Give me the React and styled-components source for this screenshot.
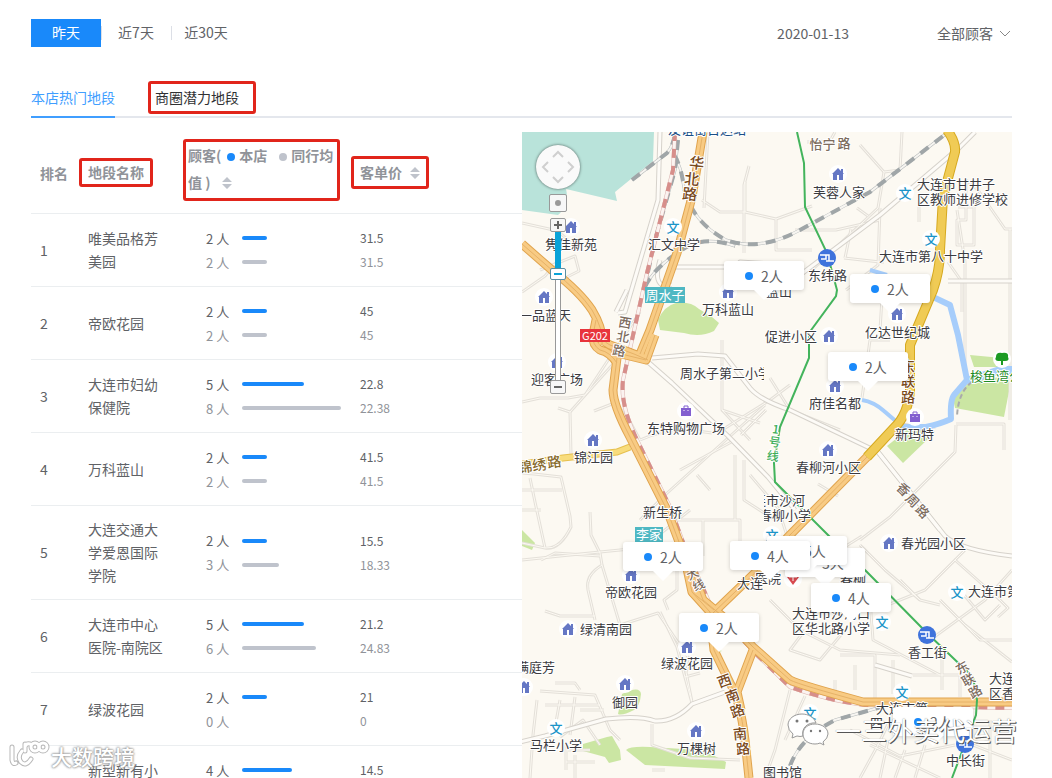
import React, { useState } from "react";
import styled, { createGlobalStyle } from "styled-components";

const COLORS = {
  blue: "#1989fa",
  tabBlue: "#409eff",
  text: "#606266",
  dark: "#303133",
  grey: "#909399",
  bar: "#bfc3cc",
  line: "#ebeef0",
  red: "#e1251b",
};

const MAX_PEOPLE = 8;

const rows = [
  { name: "唯美品格芳美园", people: [2, 2], price: ["31.5", "31.5"] },
  { name: "帝欧花园", people: [2, 2], price: ["45", "45"] },
  { name: "大连市妇幼保健院", people: [5, 8], price: ["22.8", "22.38"] },
  { name: "万科蓝山", people: [2, 2], price: ["41.5", "41.5"] },
  { name: "大连交通大学爱恩国际学院", people: [2, 3], price: ["15.5", "18.33"] },
  { name: "大连市中心医院-南院区", people: [5, 6], price: ["21.2", "24.83"] },
  { name: "绿波花园", people: [2, 0], price: ["21", "0"] },
  { name: "新型新有小区", people: [4, 4], price: ["14.5", "15.2"] },
];

// map coordinates all share the viewBox below
const MAP = { x: 522, y: 132, width: 490, height: 646 };

const markers = [
  { x: 785, y: 548, count: 3 },
  { x: 767, y: 536, count: 5 },
  { x: 724, y: 261, count: 2 },
  { x: 850, y: 274, count: 2 },
  { x: 828, y: 352, count: 2 },
  { x: 623, y: 542, count: 2 },
  { x: 730, y: 541, count: 4 },
  { x: 811, y: 583, count: 4 },
  { x: 679, y: 613, count: 2 },
  { x: 893, y: 707, count: 2 },
];

const water = ["M522 132H654L653 161L615 192L617 201L566 189A26 26 0 0 1 558 215L522 210Z"];

const parks = [
  "M658 320Q664 306 676 303Q690 301 699 309L712 317L719 323L714 331Q700 338 684 333L660 330Z",
  "M970 355L1002 358L1000 367L974 367Z",
  "M953 398L972 380L1012 376L1004 417L955 408Z",
  "M887 446L907 430L930 430L928 439L903 463Z",
  "M622 694Q640 685 641 694Q640 706 634 710Q622 716 618 714Z",
  "M583 744L607 737L612 736L620 750L621 760L609 763L605 757L583 751Z",
  "M626 750Q630 746 650 747L700 750Q716 756 726 762L725 769L645 765Z",
  "M522 530L535 543L532 550L522 546Z",
  "M714 648L722 651L716 653Z",
];

const river = [
  "M870 270L887 275",
  "M933 297L950 305L958 335L967 380L954 395Q950 400 951 419Q940 424 926 427H900",
  "M898 423L884 411Q874 402 862 400",
];

const minorRoads = [
  "M522 223L558 231L572 244",
  "M522 292L545 276L560 258",
  "M540 270L575 256L579 271L563 279",
  "M522 402L540 398H568L585 395L640 312",
  "M558 408L570 412L571 455",
  "M570 412L614 363",
  "M594 411L612 404",
  "M522 473L534 474L561 477L570 516L571 527Q560 550 545 548L522 543",
  "M530 478L535 502L545 548",
  "M522 490H562",
  "M522 510H541",
  "M590 512L591 535L600 553L602 565Q585 575 588 590L595 620",
  "M522 560L560 556L640 548",
  "M602 565L620 625L658 613L690 660L686 672L692 702",
  "M545 611L560 616H595",
  "M660 612L677 647L683 670L692 703",
  "M685 677L700 673",
  "M677 520H740V560",
  "M703 520V556",
  "M677 560L677 590L664 600L668 610",
  "M640 520L665 495L728 438L765 405",
  "M697 475L710 490",
  "M640 440Q670 425 712 433",
  "M622 407L640 440",
  "M749 166L744 185V253",
  "M745 182V212",
  "M702 200L720 212H745L776 219L812 206",
  "M704 208L708 132",
  "M776 219V250H812",
  "M795 230H836L880 220",
  "M860 145L884 172L900 170",
  "M902 132L900 170",
  "M880 208L878 265L846 290",
  "M851 229L845 258",
  "M857 208L868 216",
  "M884 172L878 208L812 270",
  "M807 142L830 141L835 132",
  "M844 258L880 262L884 262",
  "M919 200V222",
  "M966 180L978 190L1005 229H1012",
  "M958 207H974V245H957V220H966V182",
  "M1010 229V420",
  "M948 262L962 282V312",
  "M957 210L965 262V370",
  "M880 330L882 298",
  "M862 398L870 340H890",
  "M770 378L790 410L840 430",
  "M722 340V410L750 440",
  "M722 430L770 400",
  "M770 400L790 385",
  "M735 455V520",
  "M744 460V500L775 520",
  "M722 410L760 423",
  "M741 435L766 410",
  "M750 475L778 508L790 545",
  "M860 540L890 517L955 452L956 425",
  "M956 424H1004V450",
  "M818 484L838 496",
  "M830 556L862 536",
  "M860 545L885 570L920 600",
  "M880 608L925 590L955 560L1000 600",
  "M900 580L920 600L940 605",
  "M955 560L965 550",
  "M930 640L985 600L1012 570",
  "M940 600L980 640H1012",
  "M965 625L1012 662",
  "M960 590L985 620L1000 605",
  "M990 590L1008 608L998 617",
  "M900 655L840 650L800 630L770 600",
  "M845 630L820 660L790 650L805 630",
  "M840 655H875V700",
  "M835 680V700",
  "M855 665V690",
  "M893 660V694",
  "M913 675H960V697",
  "M942 650V690",
  "M870 600L873 640L940 675",
  "M790 690L775 750L765 778",
  "M805 696L785 740",
  "M890 720L878 745L860 778",
  "M850 730L900 756L955 745",
  "M870 745L940 778",
  "M888 740L880 778",
  "M905 750L895 778",
  "M925 745L915 778",
  "M990 720V778",
  "M960 740L1012 760",
  "M540 691L595 695L610 730L620 740",
  "M537 700L533 735L530 778",
  "M555 683H575L580 690",
  "M545 705H600",
  "M560 700L556 722",
  "M575 697L570 735",
  "M560 737L583 720L600 745",
  "M580 710H604",
  "M566 745V770",
  "M568 750H590",
  "M566 762H595",
  "M575 755V778",
  "M652 724V745L690 758L740 760",
  "M652 770H665",
  "M541 560L555 553L600 556",
  "M680 470L735 440",
  "M690 510L640 550",
];

const mediumRoads = [
  "M660 132L658 200L625 312L618 313",
  "M616 312L627 290",
  "M676 267H740V262L800 266",
  "M660 260Q654 280 662 285H672",
  "M520 742L545 736L606 719Q640 715 655 721Q675 722 692 704L725 692",
  "M648 362L672 383L728 436L768 477L795 510",
  "M652 358L698 354L725 356L750 388Q760 400 790 410L878 452L940 530",
  "M878 452L945 536Q960 550 1012 556",
  "M975 132L960 147L880 215L800 275",
  "M906 405L900 425L935 430",
  "M948 281H1012",
  "M875 665L912 676",
];

const trunks = [
  "M522 244L553 271Q580 292 592 310Q604 330 602 345",
  "M596 320L593 335Q592 345 600 350Q610 352 617 363",
  "M605 335Q600 340 610 345L634 354L648 360",
  "M703 132L692 197L677 253L650 330L640 354",
  "M655 335L646 360L617 353",
  "M617 358L613 390Q613 405 630 437L667 510L682 550",
  "M682 545L692 592L710 612L714 650L730 683Q740 700 745 740L749 778",
  "M688 560L703 600L727 620L753 647L790 680Q800 685 863 702H1012",
  "M712 614L760 568L787 538L867 457",
  "M692 592L714 610",
  "M753 650L737 692L741 710",
];

const yellowRoads = [
  "M867 457L894 428Q908 415 910 390V345L933 290Q940 270 940 250L943 197L955 152Q956 142 947 130",
];

const railways = [
  "M632 180L667 153Q674 145 675 132",
  "M678 140L675 170L655 240L644 290",
  "M674 155Q681 165 684 188Q692 222 726 240Q760 252 800 230L870 192L947 133",
  "M645 287Q655 265 690 245Q710 237 735 246",
  "M790 766Q800 738 835 720L885 706",
];

const redRailways = [
  "M675 132L673 170L647 273L623 380Q620 405 637 440L670 507L684 545L710 604",
  "M710 604L755 653L790 687Q830 701 865 705L1012 708",
];

const houses = [
  [571, 227], [838, 174], [728, 292], [829, 336], [897, 314], [835, 386],
  [544, 297], [557, 362], [593, 440], [828, 450], [889, 543], [631, 575],
  [568, 629], [687, 647], [625, 684], [524, 687], [696, 731],
];

const schools = [
  [673, 227], [905, 193], [931, 239], [772, 535], [957, 592], [882, 622],
  [902, 692], [810, 713], [556, 728],
];

const metros = [[827, 258], [927, 635], [965, 744]];

const bags = [[686, 411], [915, 417]];

const places = [
  { x: 545, y: 249, text: "隽佳新苑" },
  { x: 648, y: 249, text: "汇文中学" },
  { x: 813, y: 197, text: "芙蓉人家" },
  { x: 917, y: 189, text: "大连市甘井子" },
  { x: 917, y: 204, text: "区教师进修学校" },
  { x: 879, y: 261, text: "大连市第八十中学" },
  { x: 808, y: 280, text: "东纬路" },
  { x: 766, y: 296, text: "蓝山" },
  { x: 702, y: 314, text: "万科蓝山" },
  { x: 765, y: 341, text: "促进小区" },
  { x: 865, y: 337, text: "亿达世纪城" },
  { x: 519, y: 320, text: "一品蓝天" },
  { x: 531, y: 384, text: "迎客广场" },
  { x: 809, y: 408, text: "府佳名都" },
  { x: 647, y: 433, text: "东特购物广场" },
  { x: 895, y: 439, text: "新玛特" },
  { x: 574, y: 462, text: "锦江园" },
  { x: 796, y: 472, text: "春柳河小区" },
  { x: 643, y: 517, text: "新生桥" },
  { x: 901, y: 548, text: "春光园小区" },
  { x: 755, y: 583, text: "医院" },
  { x: 737, y: 588, text: "大连" },
  { x: 840, y: 584, text: "春柳" },
  { x: 605, y: 597, text: "帝欧花园" },
  { x: 968, y: 596, text: "大连市第" },
  { x: 792, y: 618, text: "大连市沙河口" },
  { x: 792, y: 633, text: "区华北路小学" },
  { x: 580, y: 634, text: "绿清南园" },
  { x: 908, y: 657, text: "香工街" },
  { x: 661, y: 668, text: "绿波花园" },
  { x: 516, y: 672, text: "满庭芳" },
  { x: 989, y: 683, text: "大连市" },
  { x: 989, y: 698, text: "区香工" },
  { x: 612, y: 707, text: "御园" },
  { x: 876, y: 713, text: "大连市第" },
  { x: 870, y: 728, text: "四十" },
  { x: 530, y: 750, text: "马栏小学" },
  { x: 677, y: 753, text: "万棵树" },
  { x: 946, y: 765, text: "中长街" },
  { x: 763, y: 777, text: "图书馆" },
];

// street names are set one glyph at a time along the road
const streets = [
  { color: "#7a4a1c", size: 15, turn: 6, glyphs: [["华", 697, 162], ["北", 692, 178], ["路", 690, 193]] },
  { color: "#7d6c5e", size: 13, turn: 0, glyphs: [["怡", 816, 143], ["宁", 829, 143], ["路", 844, 142]] },
  { color: "#7d6c5e", size: 13, turn: 10, glyphs: [["西", 625, 322], ["北", 623, 336], ["路", 619, 350]] },
  { color: "#7a4a1c", size: 14, turn: 0, glyphs: [["东", 908, 365], ["联", 908, 380], ["路", 908, 396]] },
  { color: "#85682a", size: 14, turn: -8, glyphs: [["锦", 525, 466], ["绣", 539, 464], ["路", 554, 461]] },
  { color: "#3fae5a", size: 12, turn: 8, glyphs: [["1", 776, 428], ["号", 775, 441], ["线", 773, 455]] },
  { color: "#7d6c5e", size: 13, turn: 45, glyphs: [["香", 904, 489], ["周", 913, 500], ["路", 923, 511]] },
  { color: "#7d6c5e", size: 13, turn: -30, glyphs: [["东", 962, 667], ["联", 968, 679], ["路", 975, 691]] },
  { color: "#7d6c5e", size: 12, turn: -25, glyphs: [["大", 692, 573], ["线", 698, 584]] },
  { color: "#7a4a1c", size: 14, turn: -20, glyphs: [["西", 724, 680], ["南", 732, 695], ["路", 737, 710]] },
  { color: "#7a4a1c", size: 14, turn: -5, glyphs: [["南", 740, 733], ["路", 743, 748]] },
];

const paths = (list) => list.map((d) => <path key={d} d={d} />);

const Road = ({ list, edge, fill, width, border = 2 }) => (
  <g fill="none" strokeLinejoin="round">
    <g stroke={edge} strokeWidth={width + border}>{paths(list)}</g>
    <g stroke={fill} strokeWidth={width}>{paths(list)}</g>
  </g>
);

const CityMap = () => (
  <MapSvg
    viewBox={`${MAP.x} ${MAP.y} ${MAP.width} ${MAP.height}`}
    width={MAP.width}
    height={MAP.height}
  >
    <clipPath id="tileRight">
      <rect x="764" y="132" width="248" height="646" />
    </clipPath>
    <clipPath id="tileLeft">
      <rect x="522" y="132" width="242" height="646" />
    </clipPath>
    <g fill="#b9e3da">{paths(water)}</g>
    <g fill="#cbe6a3">{paths(parks)}</g>
    <Road list={minorRoads} edge="#e4e0d9" fill="#fcf9f2" width={1} />
    <Road list={mediumRoads} edge="#d6d2cb" fill="#fdfbf7" width={3} />
    <g fill="none" stroke="#a6cdfb" strokeWidth="6" strokeLinejoin="round">
      <path d={river[1]} />
      <g strokeWidth="4">
        <path d={river[0]} />
        <path d={river[2]} />
      </g>
      <path d="M967 381L1000 370H1012" strokeWidth="8" />
    </g>
    <path d="M972 382Q958 392 957 417" fill="none" stroke="#aaa" strokeWidth="2" strokeDasharray="5 3" />
    <Road list={railways} edge="#b4b9ba" fill="#f7f5f1" width={2} border={1} />
    <g fill="none" stroke="#a0a6a8" strokeWidth="4" strokeDasharray="10 8">{paths(railways)}</g>
    <Road list={redRailways} edge="#dbb3b0" fill="#fbf3f0" width={3} border={1} />
    <g fill="none" stroke="#d78f8b" strokeWidth="4" strokeDasharray="9 8">{paths(redRailways)}</g>
    <Road list={["M522 464L563 458L617 452L630 447"]} edge="#e6c04f" fill="#f8dc7c" width={5} />
    <Road list={trunks} edge="#e0a44e" fill="#f8cb84" width={7} />
    <g fill="none" stroke="#e6b268" strokeWidth="1">{paths(trunks)}</g>
    <Road list={yellowRoads} edge="#d6a91f" fill="#f0cb55" width={8} />
    <path
      d="M797 132L804 163L805 207L827 253L837 290L836 296L809 333V358L780 427L774 463L775 482L830 537L867 572L927 633L973 677L977 700L976 715L952 778"
      fill="none"
      stroke="#43b45c"
      strokeWidth="2"
    />

    <g fill="#fff">
      {[...houses, ...schools, ...bags, [793, 579], [1002, 359]].map(([x, y]) => (
        <circle key={`${x}-${y}`} cx={x} cy={y} r="9" />
      ))}
    </g>
    {houses.map(([x, y]) => (
      <path
        key={`${x}-${y}`}
        transform={`translate(${x} ${y})`}
        d="M-6 0L0-6L3-3V-5H5V-1L6 0H5V6H1V1H-1V6H-5V0Z"
        fill="#6577c4"
      />
    ))}
    {schools.map(([x, y]) => (
      <SchoolGlyph key={`${x}-${y}`} x={x} y={y + 5}>文</SchoolGlyph>
    ))}
    {bags.map(([x, y]) => (
      <g key={x} transform={`translate(${x} ${y})`}>
        <path d="M-5-3H5V5H-5Z" fill="#8360d0" />
        <path d="M-2-2V-5H2V-2" fill="none" stroke="#8360d0" />
        <path d="M-2-1V0M2-1V0" stroke="#fff" />
      </g>
    ))}
    {metros.map(([x, y]) => (
      <g key={x} transform={`translate(${x} ${y})`}>
        <circle r="9" fill="#3f73dc" />
        <path d="M-7-3H2V3H7M-6 1H-1V-3M-1 3H2" fill="none" stroke="#fff" strokeWidth="1.5" />
      </g>
    ))}
    <path d="M787 577L790 573H796L799 577L793 585Z" fill="#d94a50" />
    <path d="M793 574V581M789 577H797" stroke="#fff" />
    <path
      d="M1001 365V361H998Q994 360 996 357Q996 352 1002 353Q1009 352 1008 357Q1010 361 1005 361H1003V365Z"
      fill="#1c9a24"
    />

    {places.map((place) => (
      <Place key={`${place.x}-${place.y}`} x={place.x} y={place.y}>{place.text}</Place>
    ))}
    <g clipPath="url(#tileLeft)">
      <Place x="680" y="378">周水子第二小学</Place>
    </g>
    <g clipPath="url(#tileRight)">
      <Place x="740" y="505">大连市沙河</Place>
      <Place x="746" y="520">区春柳小学</Place>
    </g>
    <Place x="970" y="381" $color="#1c8a24">梭鱼湾公园</Place>
    <Place x="668" y="134" $color="#1a4f86">友谊街百达站</Place>

    {streets.map((street) =>
      street.glyphs.map(([glyph, x, y]) => (
        <Street
          key={`${x}-${y}`}
          $color={street.color}
          $size={street.size}
          transform={`translate(${x} ${y}) rotate(${street.turn})`}
          dominantBaseline="central"
        >
          {glyph}
        </Street>
      ))
    )}

    <rect x="645" y="287" width="40" height="16" fill="#4fb8c3" />
    <Badge x="665" y="300" $size={13}>周水子</Badge>
    <rect x="635" y="527" width="28" height="15" fill="#4fb8c3" />
    <Badge x="649" y="539" $size={13}>李家</Badge>
    <rect x="580" y="329" width="30" height="13" fill="#e8343c" />
    <Badge x="595" y="340" $size={11}>G202</Badge>
  </MapSvg>
);

const Controls = () => {
  const [level, setLevel] = useState(14);
  return (
    <ControlStack>
      <PanButton aria-label="平移地图">
        <svg width="44" height="44" viewBox="0 0 44 44" fill="none" stroke="#cfcfcf" strokeWidth="2">
          <path d="M17 12L22 7L27 12M17 32L22 37L27 32M12 17L7 22L12 27M32 17L37 22L32 27" />
        </svg>
      </PanButton>
      <CenterButton aria-label="回到中心">
        <svg width="8" height="8" viewBox="0 0 8 8">
          <circle cx="4" cy="4" r="3" fill="#999" />
        </svg>
      </CenterButton>
      <ZoomButton aria-label="放大" onClick={() => setLevel(Math.min(18, level + 1))}>
        <svg width="10" height="10" viewBox="0 0 10 10" stroke="#666" strokeWidth="2">
          <path d="M1 5H9M5 1V9" />
        </svg>
      </ZoomButton>
      <ZoomRange
        type="range"
        aria-label="缩放级别"
        min="3"
        max="18"
        value={level}
        onChange={(e) => setLevel(Number(e.target.value))}
      />
      <ZoomButton aria-label="缩小" onClick={() => setLevel(Math.max(3, level - 1))}>
        <svg width="10" height="10" viewBox="0 0 10 10" stroke="#666" strokeWidth="2">
          <path d="M1 5H9" />
        </svg>
      </ZoomButton>
    </ControlStack>
  );
};

const SortIcon = ({ gap }) => (
  <SortSvg $gap={gap} width="10" height="12" viewBox="0 0 10 12" fill="#bfc3cb">
    <path d="M5 0L10 5H0ZM5 12L0 7H10Z" />
  </SortSvg>
);

const App = () => {
  const [range, setRange] = useState("昨天");
  return (
    <>
      <GlobalStyle />
      <Page>
        <Toolbar>
          <RangeGroup>
            {["昨天", "近7天", "近30天"].map((label) => (
              <RangeButton key={label} $active={range === label} onClick={() => setRange(label)}>
                {label}
              </RangeButton>
            ))}
          </RangeGroup>
          <DateText dateTime="2020-01-13">2020-01-13</DateText>
          <SelectWrapper>
            <CustomerSelect aria-label="顾客类型" defaultValue="全部顾客">
              <option>全部顾客</option>
              <option>新顾客</option>
              <option>老顾客</option>
            </CustomerSelect>
            <Chevron width="12" height="8" viewBox="0 0 12 8" fill="none" stroke="#888">
              <path d="M1 1L6 6L11 1" />
            </Chevron>
          </SelectWrapper>
        </Toolbar>

        <Tabs role="tablist">
          <Tab role="tab" aria-selected="true" $active>本店热门地段</Tab>
          <Tab role="tab" aria-selected="false">
            <Highlight $height={33} $pad="0 14px 0 4px">商圈潜力地段</Highlight>
          </Tab>
        </Tabs>

        <Content>
          <Table>
            <colgroup>
              <Col $width={48} />
              <Col $width={104} />
              <Col $width={168} />
              <Col />
            </colgroup>
            <thead>
              <tr>
                <HeadCell $left={9}>排名</HeadCell>
                <HeadCell>
                  <Highlight $height={29} $pad="0 6px">地段名称</Highlight>
                </HeadCell>
                <HeadCell $bottom={6}>
                  <Highlight $height={62} $width={157} $pad="0 2px" $line={27}>
                    顾客(
                    <Dot $color={COLORS.blue} $gap={6} />
                    本店
                    <Dot $color={COLORS.bar} $gap={12} />
                    同行均值 )
                    <SortIcon gap={12} />
                  </Highlight>
                </HeadCell>
                <HeadCell>
                  <Highlight $height={33} $pad="0 6px">
                    客单价
                    <SortIcon gap={8} />
                  </Highlight>
                </HeadCell>
              </tr>
            </thead>
            <tbody>
              {rows.map((row, index) => (
                <tr key={row.name}>
                  <Cell $left={9}>{index + 1}</Cell>
                  <Cell $left={9} $right={18}>{row.name}</Cell>
                  <Cell $left={23} $right={10}>
                    {row.people.map((count, i) => (
                      <People key={i} $peer={i === 1}>
                        <span>{count} 人</span>
                        <Track>
                          <Bar $peer={i === 1} style={{ width: `${(count / MAX_PEOPLE) * 100}%` }} />
                        </Track>
                      </People>
                    ))}
                  </Cell>
                  <Cell $left={9}>
                    {row.price.map((price, i) => (
                      <Price key={i} $peer={i === 1}>{price}</Price>
                    ))}
                  </Cell>
                </tr>
              ))}
            </tbody>
          </Table>

          <MapPanel>
            <CityMap />
            {markers.map((marker) => (
              <Marker
                key={`${marker.x}-${marker.y}`}
                style={{ left: marker.x - MAP.x, top: marker.y - MAP.y }}
              >
                <MarkerDot />
                {marker.count}人
              </Marker>
            ))}
            <Controls />
          </MapPanel>
        </Content>

        <AgencyMark>
          <svg width="42" height="36" viewBox="0 0 42 36" fill="#fff" stroke="#999" strokeWidth="1">
            <path d="M15 2C7 2 1 7 1 13Q1 18 6 22L5 26L10 24Q13 25 16 24C14 16 21 10 29 11C27 5 21 2 15 2Z" />
            <path d="M28 12C21 12 16 16 16 22S21 32 28 32Q31 32 33 31L37 33L36 30Q41 26 41 22C41 16 35 12 28 12Z" />
            <g fill="#777" stroke="none">
              <circle cx="10" cy="9" r="1.5" />
              <circle cx="20" cy="9" r="1.5" />
              <circle cx="24" cy="19" r="1.2" />
              <circle cx="33" cy="19" r="1.2" />
            </g>
          </svg>
          <AgencyName>一三外卖代运营</AgencyName>
        </AgencyMark>
        <SiteMark>
          <svg width="42" height="32" viewBox="0 0 42 32" fill="none" strokeLinecap="round">
            {[["#b8b8b8", 5], ["#fff", 3]].map(([stroke, width]) => (
              <g key={stroke} stroke={stroke} strokeWidth={width}>
                <path d="M4 7V20Q5 25 8 23M14 11Q9 17 13 22Q18 27 23 19" />
                <path d="M17 11V4M17 7Q18 3 22 4" />
                <circle cx="27" cy="7" r="4" />
                <circle cx="35" cy="7" r="4" />
              </g>
            ))}
          </svg>
          <SiteName>大数跨境</SiteName>
        </SiteMark>
      </Page>
    </>
  );
};

const GlobalStyle = createGlobalStyle`
  * {
    box-sizing: border-box;
  }

  body {
    margin: 0;
    background: #fff;
    color: ${COLORS.text};
    font-family: "Noto Sans CJK SC", sans-serif;
    font-size: 14px;
  }

  button, select, input {
    margin: 0;
    padding: 0;
    border: none;
    font: inherit;
    color: inherit;
  }
`;

const Page = styled.div`
  position: relative;
  display: flex;
  flex-direction: column;
  height: 100vh;
  overflow: hidden;
  padding: 19px 40px 0 31px;
`;

const Toolbar = styled.div`
  display: flex;
  align-items: center;
  flex-shrink: 0;
  height: 28px;
`;

const RangeGroup = styled.div`
  display: flex;
  margin-right: auto;
`;

const RangeButton = styled.button`
  width: 70px;
  height: 28px;
  padding-bottom: 2px;
  background: ${(props) =>
    props.$active
      ? COLORS.blue
      : "linear-gradient(#dcdfe6, #dcdfe6) left center / 1px 14px no-repeat"};
  color: ${(props) => (props.$active ? "#fff" : COLORS.text)};
  cursor: pointer;
`;

const DateText = styled.time`
  margin-right: 88px;
`;

const SelectWrapper = styled.div`
  position: relative;
  width: 75px;
`;

const CustomerSelect = styled.select`
  width: 100%;
  appearance: none;
  background: transparent;
`;

const Chevron = styled.svg`
  position: absolute;
  right: 1px;
  top: 7px;
  pointer-events: none;
`;

const Tabs = styled.div`
  display: flex;
  flex-shrink: 0;
  gap: 33px;
  height: 37px;
  margin: 34px 0 14px;
  box-shadow: inset 0 -2px #e4e7ed;
`;

const Tab = styled.button`
  display: flex;
  align-items: ${(props) => (props.$active ? "center" : "flex-start")};
  height: 37px;
  padding-bottom: ${(props) => (props.$active ? 4 : 0)}px;
  background: transparent;
  border-bottom: 2px solid ${(props) => (props.$active ? COLORS.tabBlue : "transparent")};
  color: ${(props) => (props.$active ? COLORS.tabBlue : COLORS.dark)};
  cursor: pointer;
`;

const Highlight = styled.span`
  display: inline-block;
  vertical-align: middle;
  width: ${(props) => (props.$width ? `${props.$width}px` : "auto")};
  height: ${(props) => props.$height}px;
  padding: ${(props) => props.$pad};
  line-height: ${(props) => props.$line || props.$height - 6}px;
  border: 3px solid ${COLORS.red};
  border-radius: 3px;
`;

const Content = styled.div`
  display: grid;
  grid-template-columns: minmax(0, 1fr) 490px;
  flex: 1;
  min-height: 0;
  align-items: start;
`;

const Table = styled.table`
  width: 100%;
  table-layout: fixed;
  border-collapse: separate;
  border-spacing: 0;
`;

const Col = styled.col`
  width: ${(props) => (props.$width ? `${props.$width}px` : "auto")};
`;

const HeadCell = styled.th`
  height: 82px;
  padding: 0 0 ${(props) => props.$bottom || 0}px ${(props) => props.$left || 0}px;
  border-bottom: 1px solid ${COLORS.line};
  color: ${COLORS.grey};
  font-weight: 700;
  text-align: left;
  white-space: ${(props) => (props.$bottom ? "normal" : "nowrap")};
`;

const Dot = styled.span`
  display: inline-block;
  width: 8px;
  height: 8px;
  margin: 0 4px 0 ${(props) => props.$gap}px;
  border-radius: 50%;
  background: ${(props) => props.$color};
`;

const SortSvg = styled.svg`
  margin-left: ${(props) => props.$gap}px;
  vertical-align: -1px;
`;

const Cell = styled.td`
  padding: 12px ${(props) => props.$right || 0}px 12px ${(props) => props.$left}px;
  border-bottom: 1px solid ${COLORS.line};
  line-height: 23px;
  vertical-align: middle;
`;

const People = styled.div`
  display: flex;
  align-items: center;
  height: 24px;
  font-size: 13px;
  color: ${(props) => (props.$peer ? COLORS.grey : COLORS.text)};

  span {
    width: 36px;
  }
`;

const Track = styled.div`
  flex: 1;
`;

const Bar = styled.div`
  height: 4px;
  border-radius: 2px;
  background: ${(props) => (props.$peer ? COLORS.bar : COLORS.blue)};
`;

const Price = styled.div`
  height: 24px;
  line-height: 24px;
  font-size: 12px;
  color: ${(props) => (props.$peer ? COLORS.grey : COLORS.text)};
`;

const MapPanel = styled.div`
  position: relative;
  height: 100%;
  overflow: hidden;
  background: #fcf9f2;
`;

const MapSvg = styled.svg`
  display: block;
`;

const Place = styled.text`
  font-size: 13px;
  fill: ${(props) => props.$color || "#3b3b40"};
  stroke: #fff;
  stroke-width: 2px;
  stroke-linejoin: round;
  paint-order: stroke;
`;

const Street = styled(Place)`
  font-size: ${(props) => props.$size}px;
  font-weight: 500;
  text-anchor: middle;
`;

const SchoolGlyph = styled.text`
  font-size: 13px;
  font-weight: 500;
  fill: #1b94c8;
  text-anchor: middle;
`;

const Badge = styled.text`
  font-size: ${(props) => props.$size}px;
  fill: #fff;
  text-anchor: middle;
`;

const Marker = styled.div`
  position: absolute;
  display: flex;
  align-items: center;
  gap: 8px;
  width: 80px;
  height: 29px;
  padding-left: 21px;
  border-radius: 3px;
  background: #fff;
  box-shadow: 0 1px 4px rgba(0, 0, 0, 0.18);

  &::after {
    content: "";
    position: absolute;
    left: 30px;
    top: 29px;
    border: 10px solid transparent;
    border-top-color: #fff;
    border-bottom: none;
  }
`;

const MarkerDot = styled.span`
  width: 8px;
  height: 8px;
  border-radius: 50%;
  background: ${COLORS.blue};
`;

const ControlStack = styled.div`
  position: absolute;
  left: 14px;
  top: 13px;
  display: flex;
  flex-direction: column;
  align-items: center;
`;

const PanButton = styled.button`
  width: 44px;
  height: 44px;
  border-radius: 50%;
  background: #fafafa;
  box-shadow: 0 0 3px rgba(0, 0, 0, 0.6);
`;

const CenterButton = styled.button`
  display: grid;
  place-items: center;
  width: 18px;
  height: 18px;
  margin: 5px 0 6px;
  border: 1px solid #999;
  border-radius: 2px;
  background: #f7f7f7;
`;

const ZoomButton = styled.button`
  display: grid;
  place-items: center;
  width: 16px;
  height: 14px;
  border: 1px solid #999;
  border-radius: 2px;
  background: #f7f7f7;
`;

const ZoomRange = styled.input`
  appearance: none;
  writing-mode: vertical-lr;
  direction: rtl;
  width: 16px;
  height: 148px;
  background: linear-gradient(#0aa3d8, #0aa3d8) center top / 6px 38px no-repeat,
    linear-gradient(#fff, #fff) center / 4px 100% no-repeat,
    linear-gradient(#999, #999) center / 6px 100% no-repeat;

  &::-webkit-slider-thumb {
    appearance: none;
    width: 16px;
    height: 12px;
    border: 1px solid #5a8ea3;
    border-radius: 2px;
    background: linear-gradient(#0aa3d8, #0aa3d8) center / 8px 2px no-repeat, #fff;
  }
`;

const AgencyMark = styled.div`
  position: absolute;
  right: 35px;
  bottom: 28px;
  display: flex;
  align-items: center;
  gap: 6px;
`;

const AgencyName = styled.span`
  font-size: 26px;
  line-height: 40px;
  color: #fff;
  text-shadow: 1px 1px 0 #555, 0 0 1px #777;
`;

const SiteMark = styled.div`
  position: absolute;
  left: 8px;
  bottom: 6px;
  display: flex;
  align-items: center;
  gap: 1px;
`;

const SiteName = styled.span`
  font-size: 21px;
  font-weight: 500;
  line-height: 32px;
  color: #fff;
  text-shadow: 0 0 2px #999, 0 0 2px #999, 0 0 3px #aaa;
`;

export default App;
